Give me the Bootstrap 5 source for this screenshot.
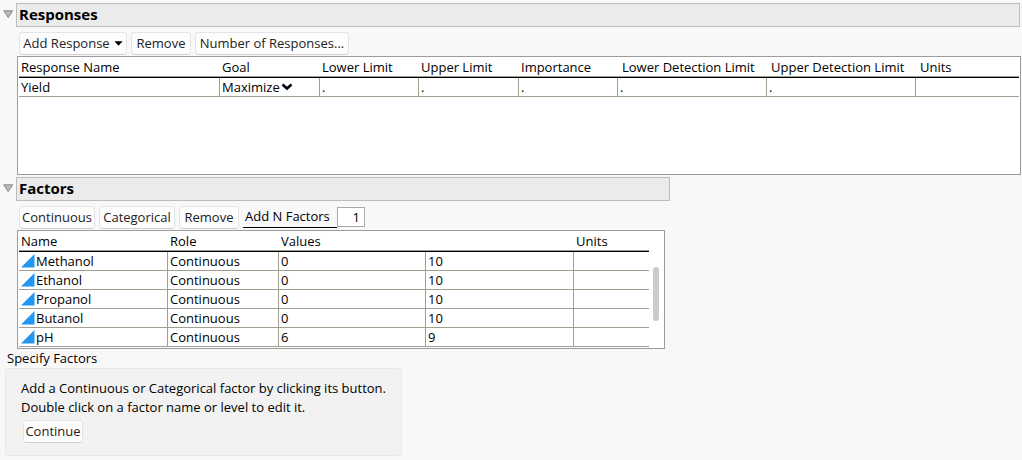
<!DOCTYPE html>
<html lang="en">
<head>
<meta charset="utf-8">
<meta name="viewport" content="width=device-width, initial-scale=1">
<title>Custom Design</title>
<link href="https://cdn.jsdelivr.net/npm/bootstrap@5.3.0/dist/css/bootstrap.min.css" rel="stylesheet">
<style>
  body { background: #f8f8f8; color: #000; font: 13px/19px "Open Sans", "Noto Sans", sans-serif; }
  main { padding-top: 3px; }
  .outline-head { padding-left: 3px; padding-right: 2px; }
  .outline-head .disclose { width: 13px; border: 0; padding: 7px 0 0; background: none; line-height: 0; }
  .outline-title { height: 24px; border: 1px solid #bcbcbc; background: #ebebeb; padding-left: 2px; font-size: 15px; line-height: 21px; font-weight: 700; }
  .tool-row { padding: 5px 0 1px 19px; gap: 4px; height: 29px; }
  .btn-tool { --bs-btn-font-size: 13px; --bs-btn-line-height: 19px; --bs-btn-padding-x: 0px; --bs-btn-padding-y: 1px; --bs-btn-bg: #fdfdfd; --bs-btn-color: #222; --bs-btn-border-color: #e4e4e4; --bs-btn-border-radius: 4px; --bs-btn-hover-bg: #f0f0f0; --bs-btn-hover-border-color: #ccc; height: 23px; border-bottom-color: #d0d0d0; white-space: nowrap; }
  .btn-short { width: 60px; }
  .btn-type { width: 76px; }
  .btn-menu { width: 108px; }
  .btn-long { width: 154px; }
  .grid-box { margin: 0 1px 2px 17px; border: 1px solid #9c9c9c; background: #fff; height: 119px; padding-left: 1px; }
  .grid-table { width: 100%; table-layout: fixed; border-collapse: separate; border-spacing: 0; }
  .grid-table th { height: 21px; padding: 0 0 0 2px; font-weight: 400; line-height: 19px; border-bottom: 1px solid #000; box-shadow: inset 0 -1px #a0a090; white-space: nowrap; }
  .grid-table th.inset-head { padding-left: 4px; }
  .grid-table td { height: 19px; padding: 0 0 0 2px; line-height: 18px; border-right: 1px solid #a0a090; border-bottom: 1px solid #a0a090; white-space: nowrap; }
  .grid-table td:last-child { border-right: 0; }
  .responses-part .grid-table { width: calc(100% - 1px); }
  .goal-select { appearance: none; border: 0; padding: 0; width: 76px; height: 18px; font: inherit; color: inherit; background: transparent; display: block; }
  .goal-arrow { position: absolute; left: 59px; top: 5px; pointer-events: none; }
  .cont-icon { display: block; margin-right: 1px; }
  .count-label { border-bottom: 1px solid #000; width: 94px; height: 22px; padding-left: 2px; line-height: 20px; white-space: nowrap; }
  .count-input { width: 28px; height: 20px; border: 1px solid #a8a8a8; padding: 0 4px; text-align: right; font: inherit; background: #fff; margin-top: 1px; }
  .factors-part { max-width: 672px; }
  .factors-part .grid-box { margin-right: 7px; margin-bottom: 0; }
  .thumb { width: 6px; height: 54px; margin: 36px 5px 0 4px; border-radius: 3px; background: #cbcbcb; }
  .specify-title { padding: 0 7px; }
  .specify-box { margin-left: 5px; width: 397px; max-width: 98%; border: 1px solid #e8e8e8; border-radius: 4px; background: #f2f2f2; padding: 10px 15px 12px; }
  .continue-btn { margin: 3px 0 0 2px; display: block; }
</style>
</head>
<body>
<main>
  <section class="responses-part">
    <div class="outline-head d-flex align-items-start">
      <button class="disclose text-start" type="button" aria-label="Collapse Responses"><svg width="11" height="9" viewBox="0 0 11 9"><path d="M.8.8h8.800L5.200 7.500z" fill="#bcbcbc" stroke="#858585"/></svg></button>
      <h1 class="outline-title flex-grow-1 mb-0">Responses</h1>
    </div>
    <div class="tool-row d-flex">
      <button class="btn btn-tool btn-menu d-flex align-items-center justify-content-center" type="button">Add Response<svg class="ms-1" width="9" height="5" viewBox="0 0 10 5"><path d="M.5 0h9L5 5z"/></svg></button>
      <button class="btn btn-tool btn-short" type="button">Remove</button>
      <button class="btn btn-tool btn-long" type="button">Number of Responses...</button>
    </div>
    <div class="grid-box">
      <table class="grid-table">
        <colgroup><col style="width:201px"><col style="width:100px"><col style="width:99px"><col style="width:100px"><col style="width:99px"><col style="width:149px"><col style="width:149px"><col></colgroup>
        <thead><tr><th>Response Name</th><th>Goal</th><th>Lower Limit</th><th>Upper Limit</th><th>Importance</th><th class="inset-head">Lower Detection Limit</th><th class="inset-head">Upper Detection Limit</th><th class="inset-head">Units</th></tr></thead>
        <tbody><tr><td>Yield</td><td><div class="position-relative"><select class="goal-select" aria-label="Goal"><option>Maximize</option><option>Minimize</option><option>Match Target</option><option>None</option></select><svg class="goal-arrow" width="12" height="8" viewBox="0 0 12 8"><path d="M1.500 1.500 6 5.500l4.500-4" fill="none" stroke="#000" stroke-width="2.600"/></svg></div></td><td>.</td><td>.</td><td>.</td><td>.</td><td>.</td><td></td></tr></tbody>
      </table>
    </div>
  </section>
  <section class="factors-part">
    <div class="outline-head d-flex align-items-start">
      <button class="disclose text-start" type="button" aria-label="Collapse Factors"><svg width="11" height="9" viewBox="0 0 11 9"><path d="M.8.8h8.800L5.200 7.500z" fill="#bcbcbc" stroke="#858585"/></svg></button>
      <h2 class="outline-title flex-grow-1 mb-0">Factors</h2>
    </div>
    <div class="tool-row d-flex">
      <button class="btn btn-tool btn-type" type="button">Continuous</button>
      <button class="btn btn-tool btn-type" type="button">Categorical</button>
      <button class="btn btn-tool btn-short" type="button">Remove</button>
      <div class="d-flex"><label class="count-label" for="count">Add N Factors</label><input class="count-input" id="count" type="text" value="1"></div>
    </div>
    <div class="grid-box d-flex align-items-start">
      <table class="grid-table flex-grow-1">
        <colgroup><col style="width:149px"><col style="width:111px"><col style="width:147px"><col style="width:148px"><col></colgroup>
        <thead><tr><th>Name</th><th>Role</th><th colspan="2">Values</th><th>Units</th></tr></thead>
        <tbody id="rows"></tbody>
      </table>
      <div class="thumb flex-shrink-0"></div>
    </div>
    <div class="specify-title">Specify Factors</div>
    <div class="specify-box">
      <p class="mb-0">Add a Continuous or Categorical factor by clicking its button.<br>Double click on a factor name or level to edit it.</p>
      <button class="btn btn-tool btn-short continue-btn" type="button">Continue</button>
    </div>
  </section>
</main>
<script src="https://cdn.jsdelivr.net/npm/bootstrap@5.3.0/dist/js/bootstrap.bundle.min.js"></script>
<script>
  const factors = [["Methanol", 0, 10], ["Ethanol", 0, 10], ["Propanol", 0, 10], ["Butanol", 0, 10], ["pH", 6, 9]];
  document.getElementById("rows").innerHTML = factors.map(([name, lo, hi]) =>
    `<tr><td><div class="d-flex align-items-center"><svg class="cont-icon" width="14" height="14" viewBox="0 0 14 14"><path d="M0 13.500 13.500 0v13.500z" fill="#2196f3"/></svg>${name}</div></td><td>Continuous</td><td>${lo}</td><td>${hi}</td><td></td></tr>`).join("");
</script>
</body>
</html>
